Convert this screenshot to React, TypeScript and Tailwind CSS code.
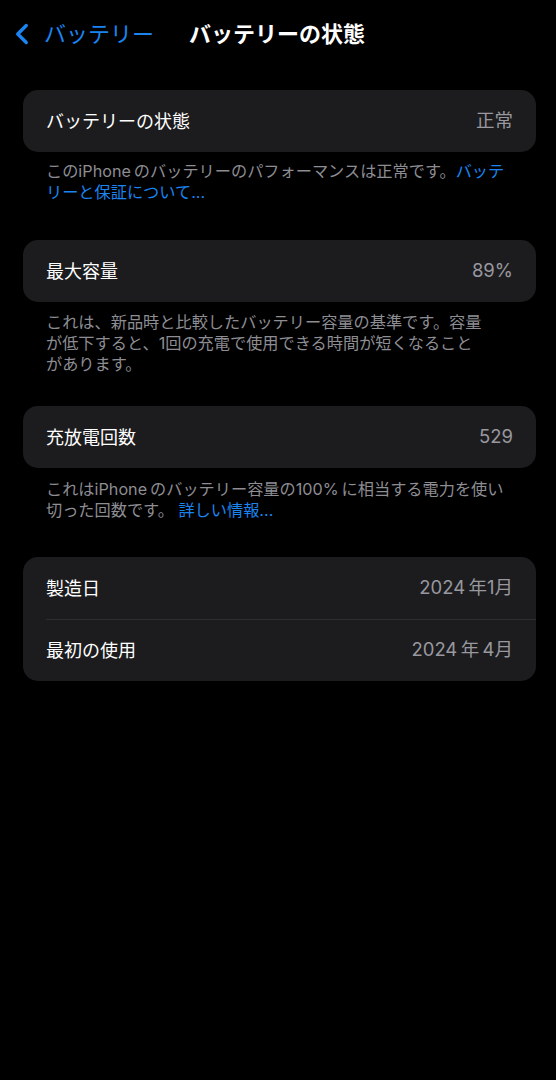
import { ChevronLeft } from 'lucide-react';
import type { ReactNode } from 'react';

const font = { fontFamily: '"Inter", "Noto Sans CJK JP", sans-serif' };

function Row({ label, value, divider }: { label: string; value: string; divider?: boolean }) {
  return (
    <div className="relative flex h-[62px] items-center justify-between px-[23px]">
      {divider && <div className="absolute left-[23px] right-0 top-0 h-px bg-[#2e2e31]" />}
      <span className="text-[18px] text-white">{label}</span>
      <span className="text-[18.5px] text-[#98989e]">{value}</span>
    </div>
  );
}

function Card({ children }: { children: ReactNode }) {
  return <div className="overflow-hidden rounded-[15px] bg-[#1c1c1e]">{children}</div>;
}

function Footer({ children, className = '' }: { children: ReactNode; className?: string }) {
  return (
    <p className={`px-[23px] text-[16.2px] leading-[21px] text-[#8d8d93] ${className}`}>{children}</p>
  );
}

export default function App() {
  return (
    <div className="min-h-[1080px] w-full bg-black" style={font}>
      {/* nav bar */}
      <div className="flex h-[68px] items-center">
        <div className="flex items-center pl-[5px] text-[#1a84f0]">
          <ChevronLeft className="h-[34px] w-[34px]" strokeWidth={2.4} />
          <span className="ml-[5px] text-[22px]">バッテリー</span>
        </div>
        <span className="ml-[35px] text-[22px] font-semibold text-white">バッテリーの状態</span>
      </div>

      <div className="mt-[22px] pl-[23px] pr-[20px]">
        <Card>
          <Row label="バッテリーの状態" value="正常" />
        </Card>
        <Footer className="mt-[9px]">
          このiPhone&thinsp;のバッテリーのパフォーマンスは正常です。<span className="text-[#1a84f0]">バッテ<br />リーと保証について...</span>
        </Footer>

        <div className="mt-[37px]">
          <Card>
            <Row label="最大容量" value="89%" />
          </Card>
        </div>
        <Footer className="mt-[10px]">
          これは、新品時と比較したバッテリー容量の基準です。容量<br />
          が低下すると、1回の充電で使用できる時間が短くなること<br />
          があります。
        </Footer>

        <div className="mt-[31px]">
          <Card>
            <Row label="充放電回数" value="529" />
          </Card>
        </div>
        <Footer className="mt-[11px]">
          これはiPhone&thinsp;のバッテリー容量の100%&thinsp;に相当する電力を使い<br />
          切った回数です。 <span className="text-[#1a84f0]">詳しい情報...</span>
        </Footer>

        <div className="mt-[36px]">
          <Card>
            <Row label="製造日" value={'2024\u2009年1月'} />
            <Row label="最初の使用" value={'2024\u2009年\u20094月'} divider />
          </Card>
        </div>
      </div>
    </div>
  );
}
